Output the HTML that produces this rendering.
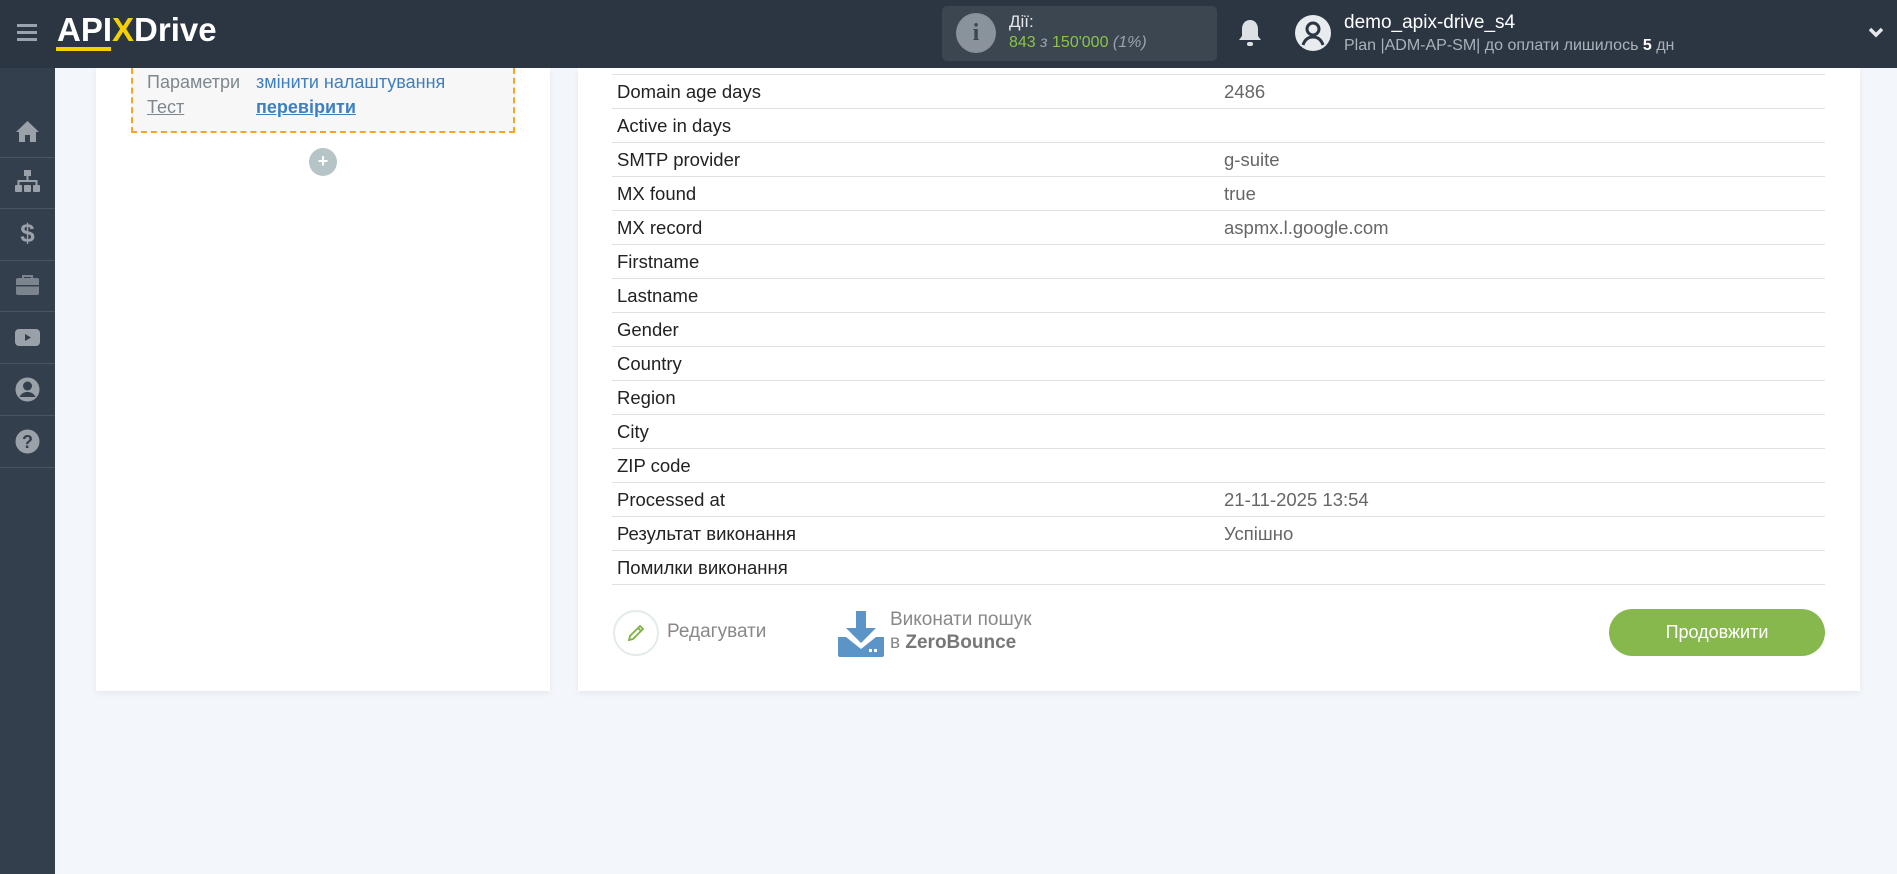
<!DOCTYPE html>
<html><head><meta charset="utf-8"><style>
*{box-sizing:border-box;margin:0;padding:0}
body{width:1897px;height:874px;overflow:hidden;background:#f3f6fa;font-family:"Liberation Sans",sans-serif;position:relative}
.hdr{position:absolute;left:0;top:0;width:1897px;height:68px;background:#2c3542;z-index:5}
.side{position:absolute;left:0;top:68px;width:55px;height:806px;background:#343f4e}
.sep{position:absolute;left:0;width:55px;height:1px;background:#4a5563}
.ic{position:absolute;left:14px;width:27px;height:27px}
.card{position:absolute;background:#fff;box-shadow:0 2px 6px rgba(0,0,0,.06)}
.row{position:absolute;left:612px;width:1213px;height:34px;border-bottom:1px solid #dfe1e4;font-size:18.5px;color:#222}
.row span{position:absolute;top:6px;left:5px}
.row .v{left:612px;color:#666}
</style></head><body>
<div class="hdr">
 <div style="position:absolute;left:17px;top:24px;width:20px;height:3px;background:#9aa3ad;box-shadow:0 7px 0 #9aa3ad,0 14px 0 #9aa3ad"></div>
 <div style="position:absolute;left:57px;top:11px;font-size:33px;font-weight:bold;color:#fff;letter-spacing:0px">API<span style="color:#f5d000">X</span>Drive</div>
 <div style="position:absolute;left:56px;top:47px;width:55px;height:4px;background:#f5d000"></div>
 <div style="position:absolute;left:942px;top:6px;width:275px;height:55px;background:#3b4651;border-radius:5px"></div>
 <div style="position:absolute;left:956px;top:13px;width:40px;height:40px;border-radius:50%;background:#8a929b;color:#3b4651;font:bold 24px 'Liberation Serif',serif;text-align:center;line-height:40px">i</div>
 <div style="position:absolute;left:1009px;top:12px;font-size:17px;color:#e5e8eb">Дії:</div>
 <div style="position:absolute;left:1009px;top:34px;font-size:16px;color:#8bc34a">843 <span style="color:#9aa3ad;font-style:italic">з</span> 150'000 <span style="color:#9aa3ad;font-style:italic">(1%)</span></div>
 <svg style="position:absolute;left:1237px;top:18px" width="26" height="30" viewBox="0 0 26 30"><path d="M13 2c-5 0-8 4-8 9v7l-3 4h22l-3-4v-7c0-5-3-9-8-9z" fill="#dde1e5"/><rect x="10" y="24" width="6" height="4" rx="2" fill="#dde1e5"/></svg>
 <svg style="position:absolute;left:1295px;top:15px" width="36" height="36" viewBox="0 0 36 36"><circle cx="18" cy="18" r="18" fill="#e9ecef"/><circle cx="18" cy="14" r="6" fill="none" stroke="#2c3542" stroke-width="3"/><path d="M8 30c2-6 6-8 10-8s8 2 10 8" fill="none" stroke="#2c3542" stroke-width="3"/></svg>
 <div style="position:absolute;left:1344px;top:12px;font-size:19px;color:#fff">demo_apix-drive_s4</div>
 <div style="position:absolute;left:1344px;top:37px;font-size:16px;color:#aab2bb">Plan |ADM-AP-SM| до оплати лишилось <b style="color:#fff">5</b> дн</div>
 <svg style="position:absolute;left:1868px;top:27px" width="16" height="12" viewBox="0 0 16 12"><path d="M2 2l6 6 6-6" fill="none" stroke="#e5e8eb" stroke-width="3.5"/></svg>
</div>
<div class="side">
 <div class="sep" style="top:89px"></div><div class="sep" style="top:140px"></div><div class="sep" style="top:192px"></div><div class="sep" style="top:243px"></div><div class="sep" style="top:295px"></div><div class="sep" style="top:347px"></div><div class="sep" style="top:399px"></div>
 <svg class="ic" style="top:50px" viewBox="0 0 27 27"><path d="M2 14L13.5 3 25 14h-3v10h-6v-7h-5v7H5V14z" fill="#9aa1a9"/></svg>
 <svg class="ic" style="top:100px" viewBox="0 0 27 27"><rect x="10" y="2" width="7" height="6" fill="#9aa1a9"/><path d="M13.5 8v5M4.5 17v-4h18v4" stroke="#9aa1a9" stroke-width="2" fill="none"/><rect x="1" y="17" width="7" height="7" rx="1" fill="#9aa1a9"/><rect x="10" y="17" width="7" height="7" rx="1" fill="#9aa1a9"/><rect x="19" y="17" width="7" height="7" rx="1" fill="#9aa1a9"/></svg>
 <div style="position:absolute;left:0;top:150px;width:55px;text-align:center;font-size:26px;font-weight:bold;color:#9aa1a9">$</div>
 <svg class="ic" style="top:204px" viewBox="0 0 27 27"><path d="M9 6V4h9v2" stroke="#7c848d" stroke-width="2" fill="none"/><rect x="2" y="6" width="23" height="17" rx="2" fill="#7c848d"/><rect x="2" y="13" width="23" height="1.5" fill="#343f4e"/></svg>
 <svg class="ic" style="top:256px" viewBox="0 0 27 27"><rect x="1" y="5" width="25" height="17" rx="4" fill="#9aa1a9"/><path d="M11 10l6 3.5-6 3.5z" fill="#343f4e"/></svg>
 <svg class="ic" style="top:308px" viewBox="0 0 27 27"><circle cx="13.5" cy="13.5" r="12" fill="#9aa1a9"/><circle cx="13.5" cy="10" r="4.5" fill="#343f4e"/><path d="M5.5 21c2-4 5-5 8-5s6 1 8 5" fill="#343f4e"/></svg>
 <svg class="ic" style="top:360px" viewBox="0 0 27 27"><circle cx="13.5" cy="13.5" r="12" fill="#9aa1a9"/><text x="13.5" y="20" text-anchor="middle" font-family="Liberation Sans" font-weight="bold" font-size="18" fill="#343f4e">?</text></svg>
</div>
<div class="card" style="left:96px;top:68px;width:454px;height:623px">
 <div style="position:absolute;left:35px;top:-10px;width:384px;height:75px;border:2px dashed #f5a623;border-top:none;background:#f7f7f7"></div>
 <div style="position:absolute;left:51px;top:4px;font-size:18px;color:#7d8790">Параметри</div>
 <div style="position:absolute;left:160px;top:4px;font-size:18px;color:#3d7fc1">змінити налаштування</div>
 <div style="position:absolute;left:51px;top:29px;font-size:18px;color:#7d8790;text-decoration:underline">Тест</div>
 <div style="position:absolute;left:160px;top:29px;font-size:18px;color:#3d7fc1;font-weight:bold;text-decoration:underline">перевірити</div>
 <div style="position:absolute;left:213px;top:80px;width:28px;height:28px;border-radius:50%;background:#b5c4c6;color:#fff;text-align:center;line-height:27px;font-size:18px;font-weight:bold">+</div>
</div>
<div class="card" style="left:578px;top:68px;width:1282px;height:623px"></div>
<div style="position:absolute;left:612px;top:74px;width:1213px;height:1px;background:#dfe1e4"></div>
<div class="row" style="top:75px"><span>Domain age days</span><span class="v">2486</span></div>
<div class="row" style="top:109px"><span>Active in days</span></div>
<div class="row" style="top:143px"><span>SMTP provider</span><span class="v">g-suite</span></div>
<div class="row" style="top:177px"><span>MX found</span><span class="v">true</span></div>
<div class="row" style="top:211px"><span>MX record</span><span class="v">aspmx.l.google.com</span></div>
<div class="row" style="top:245px"><span>Firstname</span></div>
<div class="row" style="top:279px"><span>Lastname</span></div>
<div class="row" style="top:313px"><span>Gender</span></div>
<div class="row" style="top:347px"><span>Country</span></div>
<div class="row" style="top:381px"><span>Region</span></div>
<div class="row" style="top:415px"><span>City</span></div>
<div class="row" style="top:449px"><span>ZIP code</span></div>
<div class="row" style="top:483px"><span>Processed at</span><span class="v">21-11-2025 13:54</span></div>
<div class="row" style="top:517px"><span>Результат виконання</span><span class="v">Успішно</span></div>
<div class="row" style="top:551px"><span>Помилки виконання</span></div>
<div style="position:absolute;left:613px;top:610px;width:46px;height:46px;border-radius:50%;border:2px solid #e3ece6"></div>
<svg style="position:absolute;left:626px;top:623px" width="20" height="20" viewBox="0 0 20 20"><path d="M3 17l1-4L14 3l3 3L7 16z M12 5l3 3" fill="none" stroke="#7cb342" stroke-width="1.8"/></svg>
<div style="position:absolute;left:667px;top:621px;font-size:19px;color:#888">Редагувати</div>
<svg style="position:absolute;left:838px;top:611px" width="46" height="46" viewBox="0 0 46 46"><rect x="18" y="0" width="10" height="18" fill="#5b94c6"/><path d="M8 17h30L23 32z" fill="#5b94c6"/><path d="M0 26h8l15 12 15-12h8v18a2 2 0 0 1-2 2H2a2 2 0 0 1-2-2z" fill="#5b94c6"/><rect x="31" y="38" width="3" height="3" fill="#fff"/><rect x="36" y="38" width="3" height="3" fill="#fff"/></svg>
<div style="position:absolute;left:890px;top:608px;font-size:19px;color:#888;line-height:23px">Виконати пошук<br>в <b style="color:#777">ZeroBounce</b></div>
<div style="position:absolute;left:1609px;top:609px;width:216px;height:47px;border-radius:24px;background:#86b84e;color:#fff;font-size:18px;text-align:center;line-height:47px">Продовжити</div>
</body></html>
